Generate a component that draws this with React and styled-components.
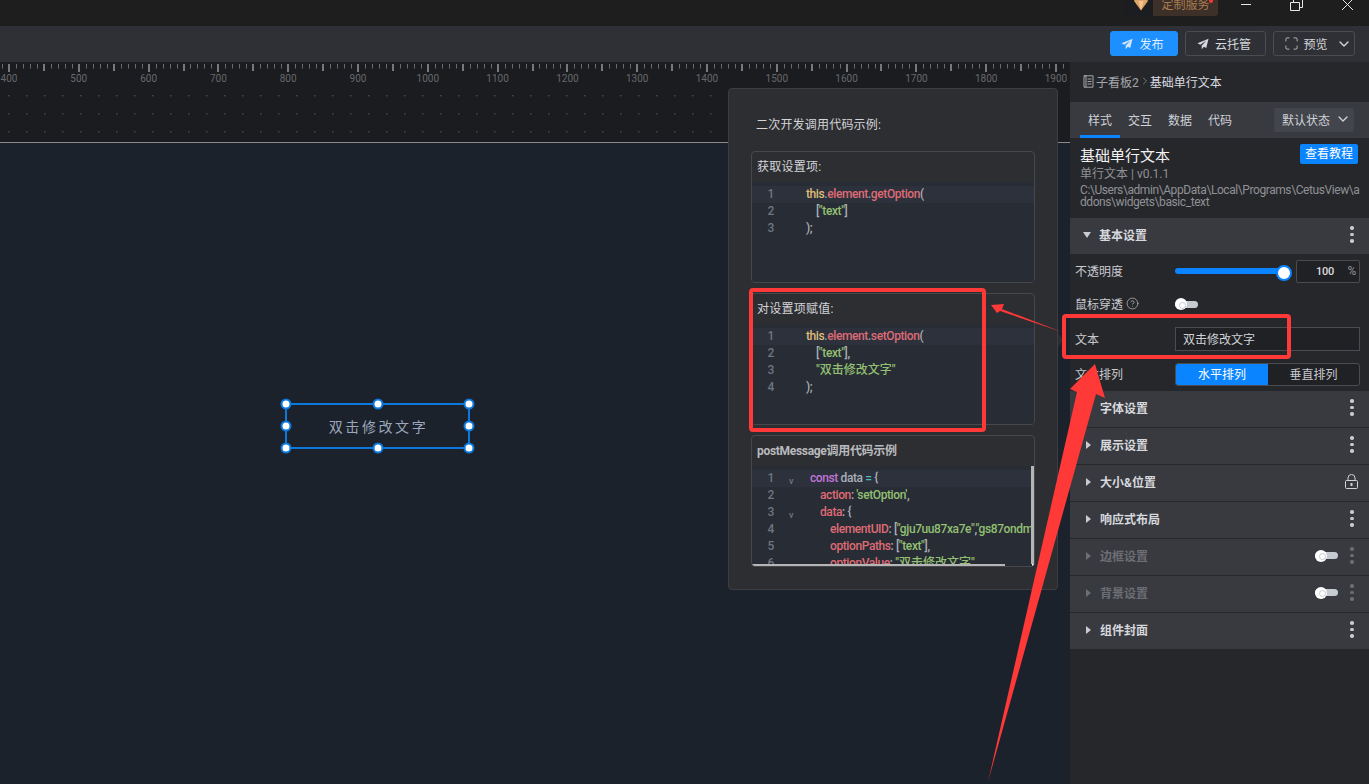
import React from "react";
import styled, { createGlobalStyle } from "styled-components";
import { ChevronDown, ChevronRight, CircleHelp, Maximize } from "lucide-react";

const FONT = `Roboto, "Noto Sans CJK SC", sans-serif`;
const RED = "#ff3838";
const BLUE = "#0a84ff";

const Global = createGlobalStyle`
  html, body { margin: 0; padding: 0; background: #1b222b; }
  * { box-sizing: border-box; }
  body { font-family: ${FONT}; font-size: 12px; color: #ccc; }
`;

const Page = styled.div`
  position: relative; width: 1369px; height: 784px; overflow: hidden;
  display: flex; flex-direction: column; background: #1b222b;
`;
const TitleBar = styled.header`
  height: 26px; flex: none; background: #1e1e1f;
  display: flex; justify-content: flex-end; align-items: flex-start;
`;
const GemBox = styled.div`
  width: 30px; height: 16px; background: #1c1d20; display: flex; justify-content: center; padding-left: 6px;
  border-radius: 0 0 0 4px;
`;
const ServiceChip = styled.div`
  position: relative; width: 65px; height: 16px; background: #3d3029; color: #a97c50;
  font-size: 12px; line-height: 11px; text-align: center; border-radius: 0 0 3px 0;
  &::after { content: ""; position: absolute; right: 5px; top: -1px; width: 4px; height: 4px; border-radius: 50%; background: #f03a3a; }
`;
const WinControls = styled.div`
  width: 151px; height: 14px; display: flex; color: #e8e8e8;
`;
const WinBtn = styled.svg`
  width: 50px; height: 14px; flex: none;
`;
const Toolbar = styled.div`
  height: 36px; flex: none; background: #2e3035; display: flex; justify-content: flex-end;
  align-items: center; gap: 7px; padding: 0 14px 1px 0;
`;
const ToolBtn = styled.button`
  height: 25px; width: ${(p) => p.$w}px; display: flex; align-items: center; justify-content: center; gap: ${(p) => p.$gap || 6}px;
  border-radius: 3px; font: 12px ${FONT}; padding: 0 ${(p) => p.$pr || 0}px 0 ${(p) => p.$pl || 0}px;
  background: ${(p) => (p.$primary ? "#1e8fff" : "transparent")};
  color: ${(p) => (p.$primary ? "#dfeeff" : "#d5d7dc")};
  border: 1px solid ${(p) => (p.$primary ? "#1e8fff" : "#4a4c52")};
`;
const Main = styled.div`
  flex: 1; min-height: 0; display: flex;
`;
const Canvas = styled.main`
  flex: 1; min-width: 0; display: flex; flex-direction: column;
`;
const Ruler = styled.svg`
  display: block; flex: none; width: 1070px; height: 80px; background: #1b1c1f;
`;
const Stage = styled.div`
  position: relative; flex: 1; background: #1b222b; border-top: 1px solid #8a8a8a;
`;
const Widget = styled.div`
  position: absolute; left: 285px; top: 260px; width: 185px; height: 46px;
  border: 2px solid #0a78dc; display: flex; align-items: center; justify-content: center; padding-left: 2px;
  color: #9ba6bb; font-size: 14px; letter-spacing: 2.6px;
`;
const HandleLayer = styled.div`
  position: absolute; inset: -1px;
`;
const Handle = styled.span`
  position: absolute; width: 11px; height: 11px; border-radius: 50%; background: #fff;
  border: 2px solid #0a78dc; transform: translate(-50%, -50%);
  left: ${(p) => p.$x}%; top: ${(p) => p.$y}%;
`;

/* right panel */
const Panel = styled.aside`
  width: 299px; flex: none; background: #26272b; display: flex; flex-direction: column;
`;
const Crumbs = styled.nav`
  height: 40px; flex: none; display: flex; align-items: center; padding: 0 0 2px 13px; color: #a5a7ac; font-size: 12px;
`;
const CrumbNow = styled.span`
  color: #dadce0; margin-left: -1px;
`;
const Tabs = styled.div`
  height: 36px; flex: none; background: #383a40; display: flex; padding-left: 10px; align-items: stretch;
`;
const Tab = styled.div`
  width: 40px; display: flex; align-items: center; justify-content: center; color: #cfd1d6; padding-top: 1px;
  border-bottom: 3px solid ${(p) => (p.$on ? BLUE : "transparent")};
`;
const StateSelect = styled.div`
  margin: 6px 15px 6px auto; width: 80px; display: flex; align-items: center; justify-content: space-between;
  background: #43454c; border-radius: 2px; padding: 0 3px 2px 8px; color: #cfd1d6;
`;
const Info = styled.section`
  height: 80px; flex: none; padding: 6px 9px 0 10px;
`;
const InfoHead = styled.div`
  display: flex; justify-content: space-between; align-items: flex-start; margin-right: 2px;
`;
const InfoTitle = styled.div`
  font-size: 15px; line-height: 22px; color: #f2f2f2; margin-top: 1px;
`;
const HelpBtn = styled.div`
  width: 58px; height: 20px; background: ${BLUE}; color: #fff; border-radius: 2px; text-align: center; line-height: 20px;
`;
const InfoSub = styled.div`
  line-height: 16px; margin-top: -1px; color: #8f9196;
`;
const InfoPath = styled.div`
  line-height: 12px; margin-top: 2px; color: #8f9196; font-size: 12px; word-break: break-all; letter-spacing: -0.42px;
`;
const SectionHead = styled.div`
  height: 37px; flex: none; background: #383a40; border-bottom: 1px solid #26272b;
  display: flex; align-items: center; padding: 0 15px 3px ${(p) => (p.$open ? 13 : 16)}px;
  color: ${(p) => (p.$off ? "#6c6e73" : "#d6d8dc")}; font-weight: 700; font-size: 12px;
`;
const CaretDown = styled.i`
  width: 0; height: 0; border-left: 4.5px solid transparent; border-right: 4.5px solid transparent; border-top: 6px solid #c9cbcf; margin-right: 8px;
`;
const CaretRight = styled.i`
  width: 0; height: 0; border-top: 4.5px solid transparent; border-bottom: 4.5px solid transparent;
  border-left: 5px solid ${(p) => (p.$off ? "#6c6e73" : "#c9cbcf")}; margin-right: 9px;
  visibility: ${(p) => (p.$hidden ? "hidden" : "visible")};
`;
const Spacer = styled.div`
  flex: 1;
`;
const Kebab = styled.span`
  display: flex; flex-direction: column; gap: 3px; width: 4px; margin-left: ${(p) => p.$ml || 0}px;
  & > i { width: 3.5px; height: 3.5px; border-radius: 50%; background: ${(p) => (p.$off ? "#6c6e73" : "#c9cbcf")}; }
`;
const SectionBody = styled.div`
  height: 136px; flex: none; padding: 4px 9px 0 5px; display: flex; flex-direction: column;
`;
const Row = styled.div`
  height: 24px; flex: none; display: flex; align-items: center; margin-bottom: ${(p) => p.$mb || 0}px;
`;
const Label = styled.div`
  width: 100px; flex: none; display: flex; align-items: center; gap: 3px; color: #c8cacf; padding-bottom: 2px;
`;
const SliderTrack = styled.div`
  position: relative; width: 115px; height: 6px; border-radius: 3px; background: ${BLUE};
  &::after { content: ""; position: absolute; right: -2px; top: -3px; width: 12px; height: 12px; border-radius: 50%; background: #fff; border: 2px solid ${BLUE}; }
`;
const NumBox = styled.div`
  margin-left: auto; width: 64px; height: 23px; background: #202124; border: 1px solid #4a4c52; border-radius: 2px;
  display: flex; align-items: center; padding: 0 3px 0 19px; justify-content: space-between; color: #dcdde0; font-weight: 500; font-size: 11px; letter-spacing: -0.3px;
`;
const Unit = styled.span`
  color: #85878c; font-size: 12px;
`;
const Toggle = styled.span`
  position: relative; display: block; width: 23px; height: 7px; border-radius: 4px; background: #c6cad1;
  &::before { content: ""; position: absolute; left: 0; top: -2.5px; width: 12px; height: 12px; border-radius: 50%; background: #fff; }
  &::after { content: ""; position: absolute; left: 3.5px; top: 1px; width: 5px; height: 5px; border-radius: 50%; border: 1px solid #c6cad1; background: #fff; }
`;
const TextBox = styled.div`
  flex: 1; height: 24px; background: #202124; border: 1px solid #4a4c52; padding: 0 0 2px 7px;
  display: flex; align-items: center; color: #cfd1d6;
`;
const Segment = styled.div`
  flex: 1; height: 23px; display: grid; grid-template-columns: 92px 1fr; border: 1px solid #4a4c52; border-radius: 3px; background: #202124; overflow: hidden;
`;
const SegItem = styled.div`
  display: flex; align-items: center; justify-content: center; margin: -1px 0; padding-bottom: 2px;
  background: ${(p) => (p.$on ? BLUE : "transparent")}; color: ${(p) => (p.$on ? "#fff" : "#c8cacf")};
`;

/* modal */
const Popover = styled.div`
  position: absolute; left: 728px; top: 88px; width: 330px; height: 502px; background: #2d2e32;
  border: 1px solid #3d3e43; border-radius: 4px; padding: 20px 22px 0;
  &::after { content: ""; position: absolute; right: -6px; top: 244px; border-left: 5px solid #2d2e32; border-top: 7px solid transparent; border-bottom: 7px solid transparent; }
`;
const PopTitle = styled.div`
  height: 32px; line-height: 32px; padding-left: 5px; color: #d4d5d8; margin-bottom: 10px; letter-spacing: 0.2px;
`;
const Card = styled.div`
  height: 132px; margin-bottom: 10px; border: 1px solid #47484d; border-radius: 4px; display: flex; flex-direction: column; overflow: hidden;
`;
const CardTitle = styled.div`
  height: 30px; flex: none; line-height: 30px; padding-left: 5px; color: ${(p) => (p.$dim ? "#b9babd" : "#d4d5d8")};
  font-weight: ${(p) => (p.$dim ? 700 : 400)}; letter-spacing: ${(p) => (p.$dim ? -0.3 : 0.25)}px;
`;
const Code = styled.div`
  position: relative; flex: 1; min-height: 0; background: #282c34; padding-top: 4px; overflow: hidden; font-weight: 500;
`;
const Line = styled.div`
  height: 17px; line-height: 17px; display: flex; white-space: nowrap; background: ${(p) => (p.$active ? "#2c313c" : "transparent")};
`;
const LineNo = styled.span`
  width: 38px; flex: none; text-align: center; color: #6f7683; font-size: 12px;
`;
const Fold = styled.span`
  width: ${(p) => p.$w}px; flex: none; color: #6f7683; font-size: 9px; padding-top: 3px; text-indent: -1px;
`;
const CodeText = styled.span`
  padding-left: ${(p) => p.$indent * 10}px; letter-spacing: -0.4px;
`;
const Tok = styled.span`
  color: ${(p) => p.$c}; letter-spacing: ${(p) => (p.$cjk ? "0" : "inherit")};
`;
const ScrollV = styled.i`
  position: absolute; right: 0; top: 0; bottom: 2px; width: 3px; background: #b5b5b5;
`;
const ScrollH = styled.i`
  position: absolute; left: 0; bottom: 0; width: 253px; height: 2.5px; background: #b5b5b5;
`;
const Corner = styled.i`
  position: absolute; right: 0; bottom: 0; width: 2px; height: 2px; background: #fff;
`;

/* annotations */
const RedBox = styled.div`
  position: absolute; left: ${(p) => p.$l}px; top: ${(p) => p.$t}px; width: ${(p) => p.$w}px; height: ${(p) => p.$h}px;
  border: 4px solid ${RED}; border-radius: 4px; pointer-events: none;
`;
const Arrows = styled.svg`
  position: absolute; inset: 0; width: 1369px; height: 784px; pointer-events: none;
`;

const C = { r: "#df6b75", y: "#dfbd78", g: "#93c073", p: "#c274d8", t: "#56b6c2", w: "#a9afba" };
const T = (c, s, cjk) => [c, s, cjk];

const CARD1 = [
  [0, [T(C.y, "this"), T(C.t, "."), T(C.r, "element"), T(C.t, "."), T(C.r, "getOption"), T(C.w, "(")]],
  [1, [T(C.w, "["), T(C.g, '"text"'), T(C.w, "]")]],
  [0, [T(C.w, ");")]],
];
const CARD2 = [
  [0, [T(C.y, "this"), T(C.t, "."), T(C.r, "element"), T(C.t, "."), T(C.r, "setOption"), T(C.w, "(")]],
  [1, [T(C.w, "["), T(C.g, '"text"'), T(C.w, "],")]],
  [1, [T(C.g, '"双击修改文字"', true)]],
  [0, [T(C.w, ");")]],
];
const CARD3 = [
  [0, [T(C.p, "const "), T(C.w, "data "), T(C.t, "= "), T(C.w, "{")], true],
  [1, [T(C.r, "action"), T(C.w, ": "), T(C.g, "'setOption'"), T(C.w, ",")]],
  [1, [T(C.r, "data"), T(C.w, ": {")], true],
  [2, [T(C.r, "elementUID"), T(C.w, ": ["), T(C.g, '"gju7uu87xa7e"'), T(C.w, ","), T(C.g, '"gs87ondmt6dt"')]],
  [2, [T(C.r, "optionPaths"), T(C.w, ": ["), T(C.g, '"text"'), T(C.w, "],")]],
  [2, [T(C.r, "optionValue"), T(C.w, ": "), T(C.g, '"双击修改文字"', true)]],
];

const CodeBlock = ({ lines, gutter, fold, children }) => (
  <Code>
    {lines.map(([indent, toks, canFold], i) => (
      <Line key={i} $active={i === 0}>
        <LineNo>{i + 1}</LineNo>
        <Fold $w={gutter}>{fold && canFold ? "v" : ""}</Fold>
        <CodeText $indent={indent}>
          {toks.map(([c, s, cjk], j) => (
            <Tok key={j} $c={c} $cjk={cjk}>{s}</Tok>
          ))}
        </CodeText>
      </Line>
    ))}
    {children}
  </Code>
);

const Dots = ({ off, ml }) => (
  <Kebab $off={off} $ml={ml}><i /><i /><i /></Kebab>
);

const Plane = ({ color }) => (
  <svg width="12" height="12" viewBox="0 0 13 13">
    <path d="M12.5 0.8 L0.5 5.6 L3.6 7.4 L10 2.8 L5 8.3 L5.2 12.2 L7.4 9.4 L10 10.8 Z" fill={color} />
  </svg>
);

const LockIcon = () => (
  <svg width="13" height="15" viewBox="0 0 13 15" style={{ marginRight: -4, flex: "none" }}>
    <path d="M1.5 6.5 H11.5 Q12.5 6.5 12.5 7.5 V13.5 Q12.5 14.5 11.5 14.5 H1.5 Q.5 14.5 .5 13.5 V7.5 Q.5 6.5 1.5 6.5 Z M3 6.5 V4 A3.5 3.5 0 0 1 10 4 V6.5" stroke="#d0d2d6" fill="none" />
    <rect x="5.5" y="9" width="2" height="3" fill="#d0d2d6" />
  </svg>
);

const RulerDrawing = () => {
  const ticks = [];
  const k = 0.698;
  for (let u = 390; u <= 1930; u += 10) {
    const x = 9 + (u - 400) * k;
    const major = u % 100 === 0;
    const mid = u % 50 === 0;
    ticks.push(
      <rect key={u} x={Math.round(x) - (major || mid ? 1 : 0)} y={2} width={major || mid ? 2 : 1} height={major ? 8 : mid ? 7 : 4.5}
        fill={major || mid ? "#77787c" : "#6a6b6f"} />
    );
  }
  const labels = [];
  for (let u = 400; u <= 1900; u += 100) {
    labels.push(
      <text key={u} x={9 + (u - 400) * k} y={20} textAnchor="middle" fontSize="10" fontFamily="Roboto, sans-serif" fill="#66686c">{u}</text>
    );
  }
  const dots = [];
  for (let y = 33; y <= 69; y += 18) {
    for (let x = 8; x < 1070; x += 18) {
      dots.push(<rect key={x + "-" + y} x={x} y={y} width="1.5" height="1.5" fill="#45464a" />);
    }
  }
  return (
    <Ruler viewBox="0 0 1070 80">
      {ticks}
      {labels}
      {dots}
    </Ruler>
  );
};

const SECTIONS = [
  { t: "展示设置" },
  { t: "大小&位置", lock: true },
  { t: "响应式布局" },
  { t: "边框设置", off: true },
  { t: "背景设置", off: true },
  { t: "组件封面" },
];

export default function App() {
  return (
    <Page>
      <Global />
      <TitleBar>
        <GemBox>
          <svg width="14" height="11" viewBox="0 0 14 11">
            <path d="M2 -3 H12 L14 1 L7 10.5 L0 1 Z" fill="#e0a468" />
            <path d="M4.5 1 H9.5 L7 10 Z" fill="#f3c594" />
          </svg>
        </GemBox>
        <ServiceChip>定制服务</ServiceChip>
        <WinControls>
          <WinBtn viewBox="0 0 50 14">
            <path d="M23 4.5 H33" stroke="currentColor" strokeWidth="1" />
          </WinBtn>
          <WinBtn viewBox="0 0 50 14">
            <path d="M22.5 2.5 H31.5 V10.5 H22.5 Z M25.5 2.5 V-0.5 H34.5 V7.5 H31.5" stroke="currentColor" strokeWidth="1" fill="none" />
          </WinBtn>
          <WinBtn viewBox="0 0 50 14">
            <path d="M24 -1 L35 10 M35 -1 L24 10" stroke="currentColor" strokeWidth="1" fill="none" />
          </WinBtn>
        </WinControls>
      </TitleBar>
      <Toolbar>
        <ToolBtn $primary $w={68} $gap={6} $pr={3}><Plane color="#cfe4fb" />发布</ToolBtn>
        <ToolBtn $w={81} $gap={6} $pr={3}><Plane color="#d5d7dc" />云托管</ToolBtn>
        <ToolBtn $w={82} $gap={4} $pl={8}><Maximize size={15} strokeWidth={1.25} />预览<ChevronDown size={16} strokeWidth={2} style={{ marginLeft: 4 }} /></ToolBtn>
      </Toolbar>
      <Main>
        <Canvas>
          <RulerDrawing />
          <Stage>
            <Widget>
              双击修改文字
              <HandleLayer>
                <Handle $x={0} $y={0} />
                <Handle $x={50} $y={0} />
                <Handle $x={100} $y={0} />
                <Handle $x={0} $y={50} />
                <Handle $x={100} $y={50} />
                <Handle $x={0} $y={100} />
                <Handle $x={50} $y={100} />
                <Handle $x={100} $y={100} />
              </HandleLayer>
            </Widget>
          </Stage>
        </Canvas>
        <Panel>
          <Crumbs>
            <svg width="11" height="13" viewBox="0 0 11 13" style={{ marginRight: 2 }}>
              <path d="M1 .8 H10 V12.2 H1 Z M1 .8 H3 V12.2 M4.5 4 H8.5 M4.5 6.5 H8.5 M4.5 9 H8.5" stroke="#a5a7ac" fill="none" />
            </svg>
            子看板2
            <ChevronRight size={12} strokeWidth={1.25} />
            <CrumbNow>基础单行文本</CrumbNow>
          </Crumbs>
          <Tabs>
            <Tab $on>样式</Tab>
            <Tab>交互</Tab>
            <Tab>数据</Tab>
            <Tab>代码</Tab>
            <StateSelect>默认状态<ChevronDown size={16} /></StateSelect>
          </Tabs>
          <Info>
            <InfoHead>
              <InfoTitle>基础单行文本</InfoTitle>
              <HelpBtn>查看教程</HelpBtn>
            </InfoHead>
            <InfoSub>单行文本 | v0.1.1</InfoSub>
            <InfoPath>C:\Users\admin\AppData\Local\Programs\CetusView\addons\widgets\basic_text</InfoPath>
          </Info>
          <SectionHead $open>
            <CaretDown />基本设置<Spacer /><Dots />
          </SectionHead>
          <SectionBody>
            <Row $mb={9}>
              <Label>不透明度</Label>
              <SliderTrack />
              <NumBox>100<Unit>%</Unit></NumBox>
            </Row>
            <Row $mb={11}>
              <Label>鼠标穿透<CircleHelp size={13} strokeWidth={1.25} /></Label>
              <Toggle />
            </Row>
            <Row $mb={11}>
              <Label>文本</Label>
              <TextBox>双击修改文字</TextBox>
            </Row>
            <Row>
              <Label>文本排列</Label>
              <Segment>
                <SegItem $on>水平排列</SegItem>
                <SegItem>垂直排列</SegItem>
              </Segment>
            </Row>
          </SectionBody>
          <SectionHead>
            <CaretRight $hidden />字体设置<Spacer /><Dots />
          </SectionHead>
          {SECTIONS.map((s) => (
            <SectionHead key={s.t} $off={s.off}>
              <CaretRight $off={s.off} />{s.t}<Spacer />
              {s.off && <Toggle />}
              {s.lock ? <LockIcon /> : <Dots off={s.off} ml={s.off ? 12 : 0} />}
            </SectionHead>
          ))}
        </Panel>
      </Main>

      <Popover>
        <PopTitle>二次开发调用代码示例:</PopTitle>
        <Card>
          <CardTitle>获取设置项:</CardTitle>
          <CodeBlock lines={CARD1} gutter={16} />
        </Card>
        <Card>
          <CardTitle>对设置项赋值:</CardTitle>
          <CodeBlock lines={CARD2} gutter={16} />
        </Card>
        <Card>
          <CardTitle $dim>postMessage调用代码示例</CardTitle>
          <CodeBlock lines={CARD3} gutter={20} fold>
            <ScrollV />
            <ScrollH />
            <Corner />
          </CodeBlock>
        </Card>
      </Popover>

      <RedBox $l={749} $t={288} $w={237} $h={144} />
      <RedBox $l={1062} $t={314} $w={229} $h={45} />
      <Arrows viewBox="0 0 1369 784">
        <path d="M991 305 L1004 304 L1002 309 L1062 332 L1000 311 L997 313 Z" fill={RED} />
        <path d="M1095 364 L1105 398 L1096 394 L988 782 L1077 392 L1070 389 Z" fill={RED} />
      </Arrows>
    </Page>
  );
}
